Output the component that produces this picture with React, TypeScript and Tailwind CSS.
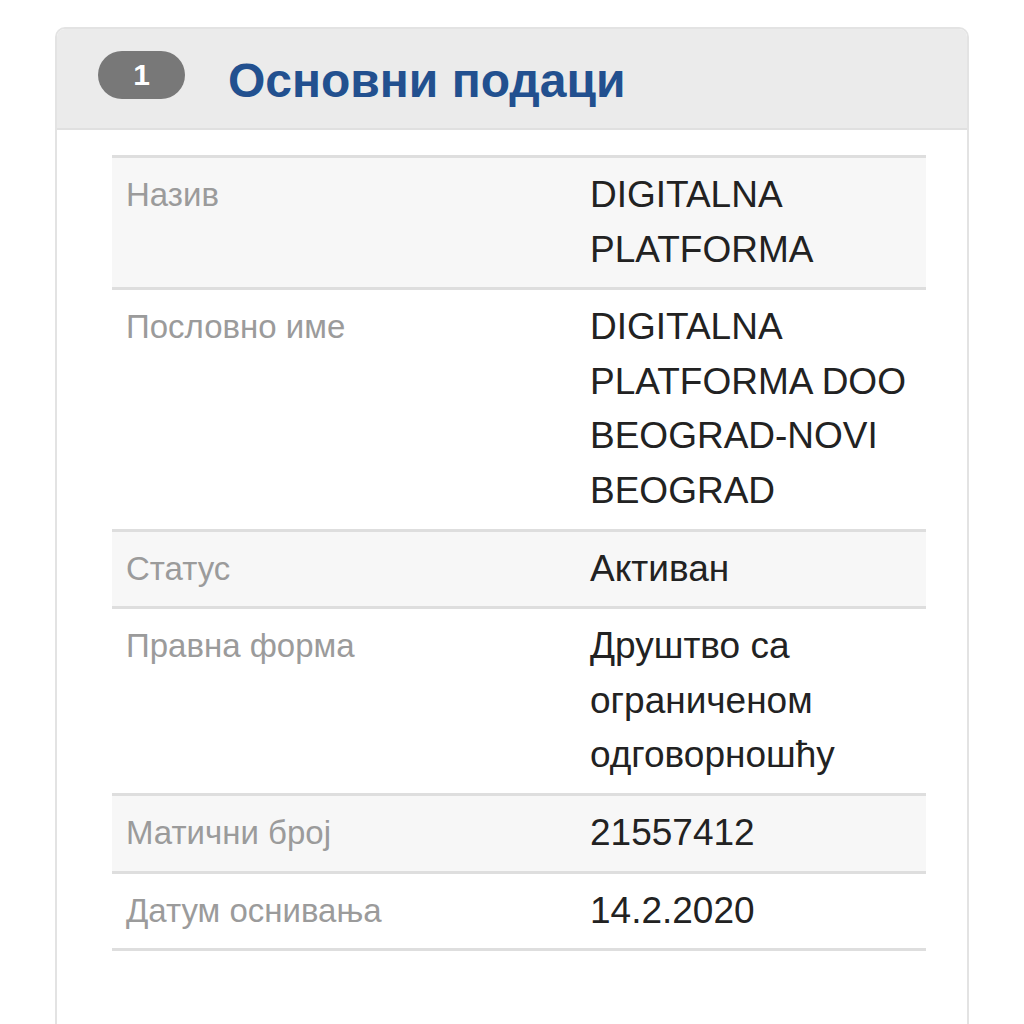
import React from "react";

const rows: { label: string; value: string[] }[] = [
  { label: "Назив", value: ["DIGITALNA", "PLATFORMA"] },
  { label: "Пословно име", value: ["DIGITALNA", "PLATFORMA DOO", "BEOGRAD-NOVI", "BEOGRAD"] },
  { label: "Статус", value: ["Активан"] },
  { label: "Правна форма", value: ["Друштво са", "ограниченом", "одговорношћу"] },
  { label: "Матични број", value: ["21557412"] },
  { label: "Датум оснивања", value: ["14.2.2020"] },
];

export default function App() {
  return (
    <div
      className="w-[1024px] h-[1024px] bg-white overflow-hidden pt-[27px] pl-[55px]"
      style={{ fontFamily: '"Liberation Sans", Arial, sans-serif' }}
    >
      <div className="w-[914px] h-[1100px] border-2 border-[#e3e3e3] rounded-t-[10px] bg-white">
        <div className="h-[101px] bg-[#ebebeb] border-b-2 border-[#e0e0e0] rounded-t-[8px] flex items-center pl-[41px]">
          <div className="w-[87px] h-[48px] mb-[8px] rounded-full bg-[#787878] flex items-center justify-center text-white font-bold text-[30px] leading-none">
            1
          </div>
          <div className="ml-[43px] text-[#22508f] font-bold text-[48px] leading-none mt-[4px]">
            Основни подаци
          </div>
        </div>
        <div className="pt-[25px] pl-[55px] pr-[41px]">
          <div className="border-t-[3px] border-[#dedede]">
            {rows.map((r, i) => (
              <div
                key={i}
                className={`flex border-b-[3px] border-[#dedede] py-[10px] ${i % 2 === 0 ? "bg-[#f7f7f7]" : "bg-white"}`}
              >
                <div className="w-[478px] pl-[14px] text-[#9b9b9b] text-[33px] leading-[54.6px] shrink-0">
                  {r.label}
                </div>
                <div className="text-[#222222] text-[37px] leading-[54.6px]">
                  {r.value.map((v, j) => (
                    <div key={j} className="whitespace-nowrap">{v}</div>
                  ))}
                </div>
              </div>
            ))}
          </div>
        </div>
      </div>
    </div>
  );
}
